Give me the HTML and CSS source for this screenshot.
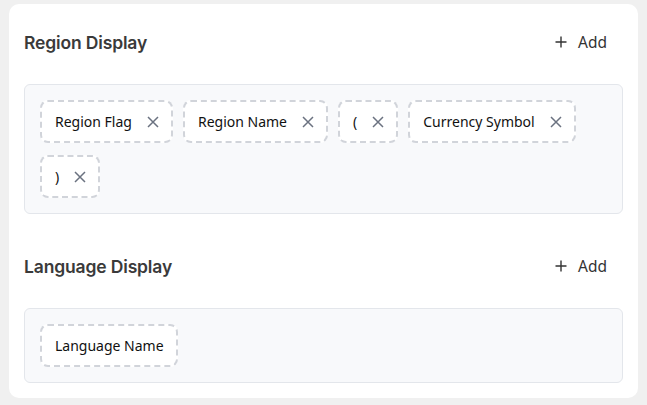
FILE: index.html
```html
<!DOCTYPE html>
<html>
<head>
<meta charset="utf-8">
<link rel="stylesheet" href="styles.css">
</head>
<body>
<div class="card">
  <section class="section">
    <div class="section-head">
      <h2 class="title">Region Display</h2>
      <button class="add-btn"><svg class="plus" viewBox="0 0 12 12" width="12" height="12"><path d="M6 0.5V11.5M0.5 6H11.5" stroke="#333" stroke-width="1.4" fill="none"/></svg><span>Add</span></button>
    </div>
    <div class="chip-box">
      <div class="chip"><span class="chip-text">Region Flag</span><svg class="x" viewBox="0 0 12 12" width="12" height="12"><path d="M1 1L11 11M11 1L1 11" stroke="#6b7280" stroke-width="1.5" fill="none"/></svg></div>
      <div class="chip"><span class="chip-text">Region Name</span><svg class="x" viewBox="0 0 12 12" width="12" height="12"><path d="M1 1L11 11M11 1L1 11" stroke="#6b7280" stroke-width="1.5" fill="none"/></svg></div>
      <div class="chip"><span class="chip-text">(</span><svg class="x" viewBox="0 0 12 12" width="12" height="12"><path d="M1 1L11 11M11 1L1 11" stroke="#6b7280" stroke-width="1.5" fill="none"/></svg></div>
      <div class="chip"><span class="chip-text">Currency Symbol</span><svg class="x" viewBox="0 0 12 12" width="12" height="12"><path d="M1 1L11 11M11 1L1 11" stroke="#6b7280" stroke-width="1.5" fill="none"/></svg></div>
      <div class="chip"><span class="chip-text">)</span><svg class="x" viewBox="0 0 12 12" width="12" height="12"><path d="M1 1L11 11M11 1L1 11" stroke="#6b7280" stroke-width="1.5" fill="none"/></svg></div>
    </div>
  </section>
  <section class="section section-second">
    <div class="section-head">
      <h2 class="title">Language Display</h2>
      <button class="add-btn"><svg class="plus" viewBox="0 0 12 12" width="12" height="12"><path d="M6 0.5V11.5M0.5 6H11.5" stroke="#333" stroke-width="1.4" fill="none"/></svg><span>Add</span></button>
    </div>
    <div class="chip-box">
      <div class="chip"><span class="chip-text">Language Name</span></div>
    </div>
  </section>
</div>
</body>
</html>
```
FILE: styles.css
```css
* { box-sizing: border-box; }
html, body { margin: 0; padding: 0; }
body {
  background: #f0f0f0;
  font-family: "Noto Sans", "Open Sans", sans-serif;
  color: #1f1f1f;
  width: 647px;
  height: 405px;
  overflow: hidden;
}
.card {
  margin: 4px 9px 0 9px;
  background: #ffffff;
  border-radius: 10px;
  padding: 20px 15px 15px 15px;
  height: 394px;
}
.section-second { margin-top: 34px; }
.section-head {
  display: flex;
  align-items: center;
  justify-content: space-between;
  height: 36px;
  margin-bottom: 24px;
}
.title {
  margin: 0;
  font-family: Inter, "Noto Sans", sans-serif;
  font-weight: 600;
  font-size: 17.5px;
  color: #3a3a3a;
  letter-spacing: -0.15px;
}
.add-btn {
  display: flex;
  align-items: center;
  gap: 11px;
  background: none;
  border: none;
  padding: 8px 16px 8px 12px;
  font-family: "Noto Sans", sans-serif;
  font-size: 15.5px;
  color: #333333;
  cursor: pointer;
}
.chip-box {
  display: flex;
  flex-wrap: wrap;
  gap: 12px 10px;
  background: #f8f9fb;
  border: 1px solid #e3e6eb;
  border-radius: 6px;
  padding: 15px;
}
.chip {
  display: flex;
  align-items: center;
  gap: 15px;
  background: #ffffff;
  border: 2px dashed #d1d4da;
  border-radius: 8px;
  padding: 10px 12px 10px 13px;
  height: 43px;
  font-size: 14px;
  line-height: 19px;
  color: #111111;
}
.x { flex: none; }
```
